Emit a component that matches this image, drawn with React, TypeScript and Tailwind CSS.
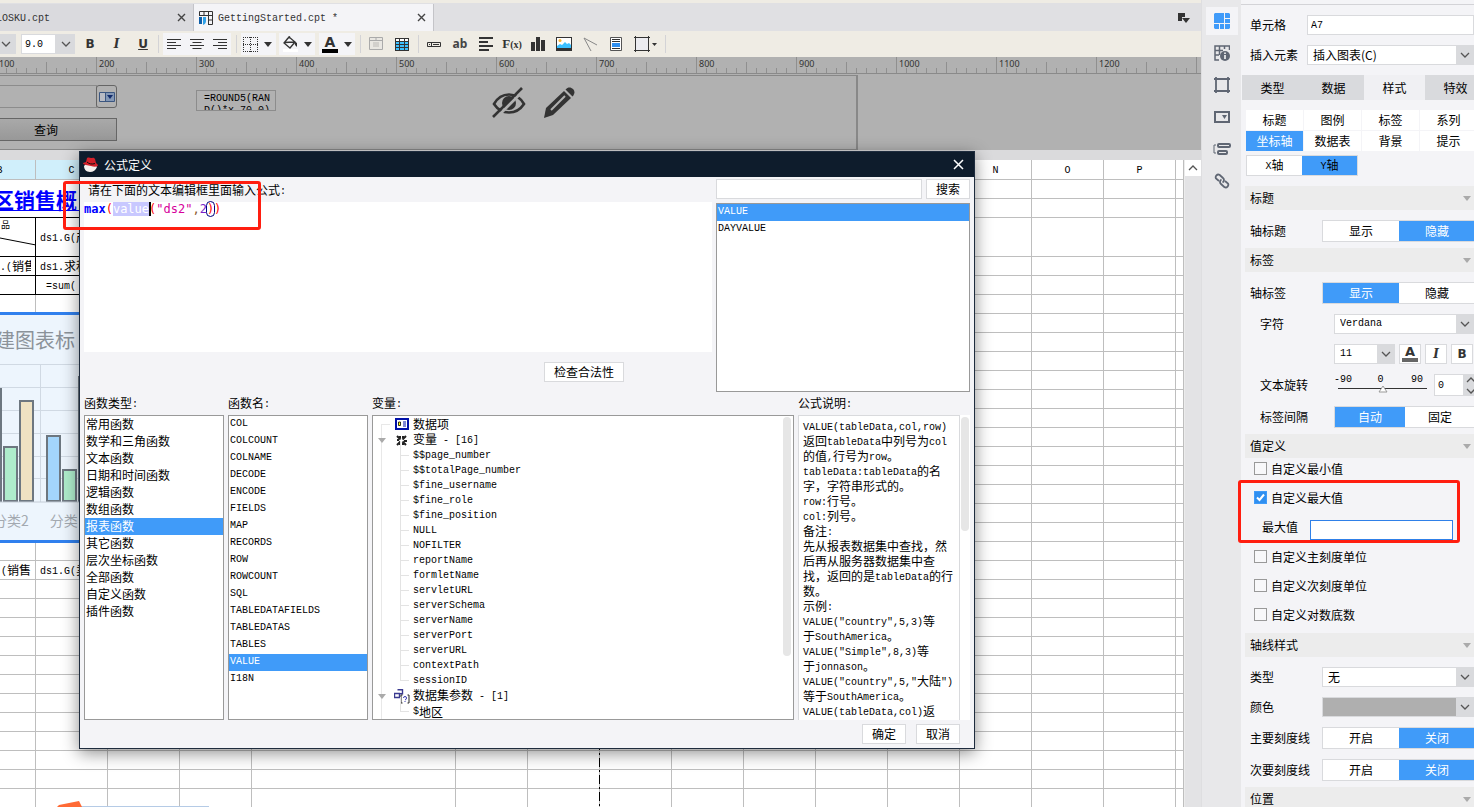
import { useState } from "react"
import clsx from "clsx"
import type { ReactNode } from "react"

const MONO = "font-['Liberation_Mono','Noto_Sans_CJK_SC',monospace] text-[10px]"

type OptionProps = {
    options: string[],
    initial: number,
    className?: string,
    itemClass: string,
}

// latin runs are half the width of a CJK glyph
const T = ({ text }: { text: string }) => (
    <>
        {text.split(/([\x20-\x7e]+)/).filter(Boolean).map((part, i) =>
            /^[\x20-\x7e]/.test(part)
                ? <span key={i} className={clsx(MONO, "align-[1px] whitespace-pre")}>{part}</span>
                : <span key={i}>{part}</span>
        )}
    </>
)

const Chevron = ({ up }: { up?: boolean }) => (
    <svg width="10" height="6" viewBox="0 0 10 6" fill="none" stroke="#555" strokeWidth="1.3">
        <path d={up ? "M1 5l4-4 4 4" : "M1 1l4 4 4-4"} />
    </svg>
)

const Caret = ({ color = "#333" }: { color?: string }) => (
    <svg width="8" height="5" viewBox="0 0 8 5" fill={color}><path d="M0 0h8L4 5z" /></svg>
)

const Cross = () => (
    <svg width="9" height="9" viewBox="0 0 9 9" stroke="#444" strokeWidth="1.4"><path d="M1 1l7 7M8 1L1 8" /></svg>
)

const Select = ({ label, options, className }: { label: string, options: string[], className?: string }) => (
    <div className={clsx("relative flex h-5 border border-[#d9dadd] bg-white", className)}>
        <select aria-label={label} className="w-full appearance-none bg-transparent pl-[5px] leading-[18px] outline-none">
            {options.map(o => <option key={o}>{o}</option>)}
        </select>
        <span className="pointer-events-none absolute inset-y-0 right-0 flex w-[17px] items-center justify-center bg-[#d9dadd]"><Chevron /></span>
    </div>
)

/* ---------- tabs and toolbar ---------- */

const FileTabs = () => (
    <div className="mt-[3px] flex h-7 items-stretch bg-[#e0e0e3] pt-px text-[#333]">
        <div className="flex w-[194px] items-center justify-between border-r border-[#c4c4c8] bg-[#dadade] pr-[7px]">
            <button className="-ml-1"><T text="LOSKU.cpt" /></button>
            <button aria-label="close"><Cross /></button>
        </div>
        <div className="flex w-[240px] items-center border-r border-[#c4c4c8] bg-[#f4f4f7] pr-[7px] pl-[5px]">
            <svg width="14" height="14" viewBox="0 0 14 14">
                <path d="M.5 5V.5h13v13H9M.5 4.500h13M5 .5v4M9.500 .5v13M9 9h4.500" fill="none" stroke="#333" />
                <path d="M0 6h3v7H0z" fill="#0d5ea8" /><path d="M4 6h3v4c0 2-1 3-3 4z" fill="#2fa0e6" />
            </svg>
            <button className="ml-[5px] flex-1 text-left"><T text="GettingStarted.cpt *" /></button>
            <button aria-label="close"><Cross /></button>
        </div>
        <button aria-label="tab list" className="mr-[11px] ml-auto">
            <svg width="12" height="10" viewBox="0 0 12 10" fill="#333"><path d="M0 0h7v4H4v4H0z" /><path d="M4 5h8L8 10z" /></svg>
        </button>
    </div>
)

const Sep = ({ className }: { className?: string }) => <span className={clsx("h-[18px] w-px bg-[#d3d3d6]", className)} />

const alignPaths = [
    "M0 1.500h14M0 4.500h9M0 7.500h14M0 10.500h9",
    "M0 1.500h14M2.500 4.500h9M0 7.500h14M2.500 10.500h9",
    "M0 1.500h14M5 4.500h9M0 7.500h14M5 10.500h9",
]

const toolIcons: { name: string, icon: ReactNode }[] = [
    {
        name: "merge",
        icon: <svg width="14" height="14" viewBox="0 0 14 14"><path d="M.5.5h13v12H.5zM.5 3.500h13M7 .5v3" fill="#e9e7e2" stroke="#aaa" /><path d="M4 5h6v5H4z" fill="#d2d0cc" /></svg>
    },
    {
        name: "unmerge",
        icon: <svg width="14" height="13" viewBox="0 0 14 13"><path d="M0 0h14v13H0z" fill="#333" /><path d="M1 1h3v2H1zM5 1h4v2H5zM10 1h3v2h-3z" fill="#fff" /><path d="M1 4h3v2H1zM5 4h4v2H5zM10 4h3v2h-3zM1 7h3v2H1zM5 7h4v2H5zM10 7h3v2h-3zM1 10h3v2H1zM5 10h4v2H5zM10 10h3v2h-3z" fill="#3cc0ff" /></svg>
    },
    {
        name: "widget",
        icon: <svg width="14" height="5" viewBox="0 0 14 5" fill="none" stroke="#333"><path d="M.5.5h13v4H.5zM4.500 .5v4M6 2.500h6M2 2.500h1" /></svg>
    },
    { name: "text", icon: <span className="font-['Noto_Sans'] text-[12px] font-bold text-[#444]">ab</span> },
    {
        name: "rich text",
        icon: <svg width="15" height="14" viewBox="0 0 15 14" stroke="#333" strokeWidth="2"><path d="M0 1h14M0 5h9M0 9h14M0 13h10" /></svg>
    },
    { name: "formula", icon: <span className="font-['Liberation_Serif'] text-[13px] font-bold text-[#333]">F<span className="text-[10px]">(x)</span></span> },
    {
        name: "chart",
        icon: <svg width="14" height="14" viewBox="0 0 14 14" fill="#333"><path d="M0 5h4v9H0zM5 0h4v14H5zM10 3h4v11h-4z" /></svg>
    },
    {
        name: "image",
        icon: <svg width="16" height="14" viewBox="0 0 16 14"><path d="M0 0h16v14H0z" fill="#333" /><path d="M1 1h14v10H1z" fill="#fff" /><path d="M1 11V9l3-2 2 1 3-3 2 2 2-1 2 2v3z" fill="#3cc0ff" /><circle cx="4" cy="3.500" r="1.500" fill="#ffb52e" /></svg>
    },
    {
        name: "slope line",
        icon: <svg width="14" height="14" viewBox="0 0 14 14" fill="none" stroke="#888"><path d="M14 8L1 1l7 13" /></svg>
    },
    {
        name: "sub report",
        icon: <svg width="12" height="14" viewBox="0 0 12 14"><path d="M.5.5h11v13H.5z" fill="#fff" stroke="#555" /><path d="M2 2.500h8M2 11.500h8M2 4.500h8" stroke="#333" /><path d="M2 6h8v4H2z" fill="#2f8ff0" /></svg>
    },
]

const Toolbar = () => (
    <div className="flex h-[26px] items-center overflow-hidden">
        <button aria-label="font family" className="flex h-5 w-4 items-center justify-center bg-[#d9dadd] pr-1"><Chevron /></button>
        <input aria-label="font size" defaultValue="9.0" className={clsx(MONO, "ml-[5px] h-5 w-[35px] border border-[#d9dadd] bg-white pl-[3px] outline-none")} />
        <button aria-label="sizes" className="flex h-5 w-[19px] items-center justify-center bg-[#d9dadd]"><Chevron /></button>
        <div className="ml-[2px] flex font-['DejaVu_Sans'] text-[12px] text-[#333]">
            <button className="w-[26px] font-bold">B</button>
            <button className="w-[27px] font-['DejaVu_Serif'] font-bold italic">I</button>
            <button className="w-[26px] font-bold underline">U</button>
        </div>
        <Sep className="ml-[2px]" />
        <div className="ml-1 flex h-[22px] w-[68px] items-center justify-around bg-[#f4f4f7]">
            {alignPaths.map(d => (
                <button key={d} aria-label="align"><svg width="14" height="12" viewBox="0 0 14 12" stroke="#333"><path d={d} /></svg></button>
            ))}
        </div>
        <Sep className="ml-[5px]" />
        <button aria-label="border" className="ml-1 flex h-[22px] w-[35px] items-center gap-[6px] bg-[#f4f4f7] pl-[2px]">
            <svg width="15" height="15" viewBox="0 0 15 15" fill="none" stroke="#333"><path d="M0 .5h15M0 14.500h15M.5 0v15M14.500 0v15M0 7.500h15M7.500 0v15" strokeDasharray="1 1" /></svg>
            <Caret />
        </button>
        <button aria-label="fill colour" className="ml-[3px] flex h-[22px] w-9 items-center gap-[6px] bg-[#f4f4f7] pl-1">
            <svg width="15" height="16" viewBox="0 0 15 16" fill="none"><path d="M6 1l6 5-5 6-6-5zM4 3l3-2.500M1.500 6.500L11 6" stroke="#333" strokeWidth="1.300" /><path d="M11 5l3 2v4l-2-2z" fill="#333" /><path d="M0 13h15v3H0z" fill="#fff" /></svg>
            <Caret />
        </button>
        <button aria-label="font colour" className="ml-1 flex h-[22px] w-9 items-center gap-[6px] bg-[#f4f4f7] pl-[3px]">
            <span className="h-[17px] w-4 border-b-4 border-black font-['DejaVu_Sans'] text-[14px] leading-[13px] font-bold text-[#333]">A</span>
            <Caret />
        </button>
        <Sep className="mr-[2px] ml-[5px]" />
        {toolIcons.map((t, i) => (
            <div key={t.name} className="flex items-center">
                {i === 2 && <Sep className="mr-[2px] ml-[3px]" />}
                <button aria-label={t.name} className="flex w-[26px] items-center justify-center leading-[16px]">{t.icon}</button>
            </div>
        ))}
        <button aria-label="float" className="ml-[5px] flex items-center gap-[2px]">
            <svg width="16" height="16" viewBox="0 0 16 16"><path d="M2 2h12v12H2z" fill="#ececf0" /><path d="M0 1.500h16M0 14.500h16M1.500 0v16M14.500 0v16" stroke="#333" /></svg>
            <svg width="5" height="3" viewBox="0 0 5 3" fill="#333"><path d="M0 0h5L2.500 3z" /></svg>
        </button>
        <Sep className="ml-2" />
    </div>
)

const Ruler = () => (
    <div className="h-[18px] overflow-hidden bg-[#b1b1b1]">
        <div className="-ml-1 flex h-[17px] border-b border-[#8a8a8a]">
            {Array.from({ length: 13 }, (_, i) => (
                <div key={i} className="relative flex w-[100px] shrink-0 items-end">
                    {Array.from({ length: 10 }, (_, k) => (
                        <span key={k} className={clsx("w-[10px] border-l border-[#8f8f8f]", k === 0 ? "h-4" : k === 5 ? "h-[11px]" : "h-[5px]")} />
                    ))}
                    {i < 12 && <span className="absolute top-0 left-[3px] font-['Noto_Sans'] text-[9px] leading-[13px] text-[#333]">{(i + 1) * 100}</span>}
                </div>
            ))}
        </div>
    </div>
)

const ParamPane = () => (
    <div className="h-[75px] bg-[#b1b1b1]">
        <div className="relative h-[75px] w-[858px] border-t border-r-2 border-b border-[#888]">
            <input aria-label="parameter" className="absolute top-[9px] left-0 h-[23px] w-[97px] border border-l-0 border-[#8c8c8c]" />
            <button aria-label="drop-down" className="absolute top-[9px] left-[96px] flex h-[23px] w-[21px] items-center justify-center rounded-[3px] border border-[#666]">
                <svg width="16" height="10" viewBox="0 0 16 10"><path d="M.5.5h15v9H.5z" fill="#b9bcc4" stroke="#3b5680" /><path d="M7 1h8v8H7z" fill="#8397b5" /><path d="M6.500 0v10" stroke="#3b5680" /><path d="M8 3h6l-3 4z" fill="#112a6b" /></svg>
            </button>
            <button className="absolute top-[42px] left-0 h-[23px] w-[117px] border border-l-0 border-[#666] bg-linear-to-b from-[#a9a9a9] to-[#989898] pr-[24px] text-[12px]">查询</button>
            <div className={clsx(MONO, "absolute top-[14px] left-[196px] h-[21px] w-20 overflow-hidden border border-[#8c8c8c] pt-[2px] pl-[7px] leading-[12px] whitespace-nowrap")}>
                =ROUND5(RAN<br />D()*x,70,0)
            </div>
            <button aria-label="hide" className="absolute top-[11px] left-[492px]">
                <svg width="34" height="32" viewBox="0 0 34 32" fill="none" stroke="#333" strokeWidth="2.600">
                    <path d="M2 17C6 10 11 7.500 17 7.500S28 10 32 17c-4 6-9 8.500-15 8.500S6 23 2 17z" />
                    <circle cx="17" cy="16" r="7" fill="#333" stroke="none" />
                    <path d="M3 32L33 2" stroke="#b1b1b1" strokeWidth="3" /><path d="M1 30L30 1" />
                </svg>
            </button>
            <button aria-label="edit" className="absolute top-[11px] left-[543px]">
                <svg width="32" height="31" viewBox="0 0 32 31" fill="#333">
                    <path d="M1 31l2-10L21 4l7 7-18 17z" /><path d="M22.500 2.500C25-.5 28 0 30 2s2 5-.5 7.500z" /><path d="M8 23L22 9" stroke="#b1b1b1" strokeWidth="2" />
                </svg>
            </button>
        </div>
    </div>
)

/* ---------- sheet ---------- */

const columns: { label: string, width: string }[] = [
    { label: "B", width: "w-9" },
    { label: "C", width: "w-[72px]" },
    { label: "", width: "w-[72px]" },
    { label: "", width: "w-[72px]" },
    { label: "", width: "w-[204px]" },
    ...Array.from({ length: 7 }, () => ({ label: "", width: "w-[72px]" })),
    { label: "N", width: "w-[72px]" },
    { label: "O", width: "w-[72px]" },
    { label: "P", width: "w-[72px]" },
    { label: "", width: "" },
]

const cellText: Record<string, string> = {
    "2-1": "ds1.G(产",
    "3-0": ".(销售",
    "3-1": "ds1.求和",
    "4-1": " =sum(",
    "19-0": "(销售",
    "19-1": "ds1.G(卖",
}

const Sheet = () => (
    <table className="w-full table-fixed border-separate border-spacing-0 bg-white">
        <colgroup>
            {columns.map((c, i) => <col key={i} className={c.width} />)}
        </colgroup>
        <thead>
            <tr>
                {columns.map((c, i) => (
                    <th key={i} className={clsx("h-5 border-r border-b border-[#bebebe] p-0 font-normal", i < 2 && "bg-[#d0effb]")}>
                        <span className={clsx(i === 0 && "-ml-9", MONO)}>{c.label}</span>
                    </th>
                ))}
            </tr>
        </thead>
        <tbody>
            {Array.from({ length: 33 }, (_, r) => (
                <tr key={r}>
                    {columns.map((_, c) => {
                        if (r < 2 && c < 4) {
                            return r === 0 && c === 0
                                ? <td key={c} rowSpan={2} colSpan={4} className="h-[38px] border-b border-black p-0 align-top">
                                    <div className="-ml-[7px] h-[31px] border-b border-[#00f] text-[21px] leading-[38px] font-bold whitespace-nowrap text-[#00f]">区销售概</div>
                                </td>
                                : null
                        }
                        const inked = r > 1 && r < 5 && c < 2
                        const text = cellText[`${r}-${c}`]
                        return (
                            <td key={c} className={clsx(
                                "overflow-hidden border-r border-b p-0 whitespace-nowrap",
                                r === 2 ? "h-[39px]" : "h-[19px]",
                                inked ? "border-black" : "border-[#bebebe]",
                                c === 1 ? "pl-1" : c === 0 && "pr-1 text-right",
                            )}>
                                {r === 2 && c === 0 &&
                                    <svg width="36" height="38" viewBox="0 0 36 38" className="-mr-1"><text x="1" y="10" fontSize="9">品</text><path d="M0 20l36 7" stroke="#000" /></svg>}
                                {text && <div className="h-[18px] overflow-hidden leading-[17px]"><T text={text} /></div>}
                            </td>
                        )
                    })}
                </tr>
            ))}
        </tbody>
    </table>
)

const bars = [
    { x: -12, y: 74, fill: "#9fcdf5" },
    { x: 4, y: 132, fill: "#aeeccb" },
    { x: 20, y: 86, fill: "#efe2c2" },
    { x: 47, y: 121, fill: "#a3d5fb" },
    { x: 63, y: 155, fill: "#aeeccb" },
    { x: 79, y: 62, fill: "#efe2c2" },
]

const FloatChart = () => (
    <div className="absolute top-[152px] left-0 h-[231px] w-20 overflow-hidden border-y-[3px] border-[#3080ee] bg-[#edf5fd]">
        <div className="-ml-[5px] pt-[11px] text-[20px] leading-[28px] whitespace-nowrap text-[#8b9299]">建图表标</div>
        <svg className="-mt-[39px] block" width="320" height="190" viewBox="0 0 320 190" fill="none">
            <path d="M0 49.500h320M0 72.500h320M0 95.500h320M0 118.500h320M0 141.500h320M0 163.500h320M40.500 49v138" stroke="#d0d9e3" />
            {bars.map(b => <rect key={b.x} x={b.x} y={b.y} width="13" height={186 - b.y} fill={b.fill} stroke="#6d7780" strokeWidth="2" />)}
            <path d="M0 187h320" stroke="#c4ccd6" />
        </svg>
        <div className="-ml-[7px] flex gap-[21px] pt-[2px] text-[14px] leading-[26px] whitespace-nowrap text-[#a3a9b0]"><span>分类2</span><span>分类</span></div>
    </div>
)

/* ---------- formula dialog ---------- */

const functionTypes = ["常用函数", "数学和三角函数", "文本函数", "日期和时间函数", "逻辑函数", "数组函数", "报表函数", "其它函数", "层次坐标函数", "全部函数", "自定义函数", "插件函数"]

const functionNames = ["COL", "COLCOUNT", "COLNAME", "DECODE", "ENCODE", "FIELDS", "MAP", "RECORDS", "ROW", "ROWCOUNT", "SQL", "TABLEDATAFIELDS", "TABLEDATAS", "TABLES", "VALUE", "I18N"]

const variables = ["$$page_number", "$$totalPage_number", "$fine_username", "$fine_role", "$fine_position", "NULL", "NOFILTER", "reportName", "formletName", "servletURL", "serverSchema", "serverName", "serverPort", "serverURL", "contextPath", "sessionID"]

const description = [
    "VALUE(tableData,col,row)",
    "返回tableData中列号为col",
    "的值,行号为row。",
    "tableData:tableData的名",
    "字，字符串形式的。",
    "row:行号。",
    "col:列号。",
    "备注:",
    "先从报表数据集中查找，然",
    "后再从服务器数据集中查",
    "找，返回的是tableData的行",
    "数。",
    "示例:",
    "VALUE(\"country\",5,3)等",
    "于SouthAmerica。",
    "VALUE(\"Simple\",8,3)等",
    "于jonnason。",
    "VALUE(\"country\",5,\"大陆\")",
    "等于SouthAmerica。",
    "VALUE(tableData,col)返",
]

const List = ({ items, initial, className }: { items: string[], initial: string, className: string }) => {
    const [selected, setSelected] = useState<string>(initial);

    return (
        <ul className={clsx("border border-[#999] bg-white", className)}>
            {items.map(item => (
                <li key={item} className="flex">
                    <button
                        onClick={() => setSelected(item)}
                        className={clsx("flex h-[17px] w-full items-start pl-px text-left leading-[15px]", item === selected && "bg-[#409bf9] text-white")}
                    >
                        <T text={item} />
                    </button>
                </li>
            ))}
        </ul>
    )
}

const TreeGroup = ({ icon, text, open }: { icon: ReactNode, text: string, open?: boolean }) => (
    <div className="flex h-4 items-center leading-[14px]">
        <span className="flex w-[21px] justify-center pr-[4px]">{open && <Caret color="#aaa" />}</span>
        <span className="mr-[4px] flex w-[15px] justify-center">{icon}</span>
        <span><T text={text} /></span>
    </div>
)

const TreeLeaf = ({ text }: { text: string }) => (
    <div className="flex h-[15px] items-center pl-[27px] leading-[15px]">
        <span className="mr-1 -mt-[15px] h-[15px] w-[9px] border-b border-l border-[#e3e3e3]" />
        <T text={text} />
    </div>
)

const VariableTree = () => (
    <div className="relative h-[305px] flex-1 overflow-hidden border border-[#999] bg-white">
        <span className="absolute top-2 left-2 h-full w-[9px] border-t border-l border-[#e8e8e8]" />
        <div className="relative">
            <TreeGroup text="数据项" icon={<svg width="14" height="12" viewBox="0 0 14 12"><path d="M1 1h12v10H1z" fill="#fff" stroke="#0010a8" strokeWidth="2" /><path d="M3.500 4h2v3.500h-2z" fill="#ff0" stroke="#000" strokeWidth=".8" /><path d="M8 4h3M8 6h3M8 8h3" stroke="#0010a8" /></svg>} />
            <TreeGroup open text="变量 - [16]" icon={<svg width="11" height="11" viewBox="0 0 11 11" fill="none" stroke="#222" strokeWidth="2"><path d="M1 1l3.500 3.500M10 1L6.500 4.500M1 10l3.500-3.500M10 10L6.500 6.500M4 1v2M1 5h2M8 6h3M7 8v2M4 8v2M7 1v2" /></svg>} />
            {variables.map(v => <TreeLeaf key={v} text={v} />)}
            <TreeGroup open text="数据集参数 - [1]" icon={<svg width="16" height="15" viewBox="0 0 16 15" fill="none" className="shrink-0"><path d="M.5 4.500h5v4h-5zM3.500 .8h5v4h-3" stroke="#3a3a90" strokeWidth="1.400" /><path d="M8.500 6H7v8h1.500M13.500 6H15v8h-1.500" stroke="#222" /><path d="M9.500 9q0-1.500 1.500-1.500T12.500 9 11 11M11 12v1" stroke="#3a3ab0" /></svg>} />
            <TreeLeaf text="$地区" />
        </div>
        <span className="absolute top-px right-[2px] h-[239px] w-2 rounded-full bg-[#e6e6e6]" />
    </div>
)

const DialogButton = ({ text, className }: { text: string, className: string }) => (
    <button className={clsx("h-5 border border-[#d9dadd] bg-white leading-[18px]", className)}>{text}</button>
)

const ColumnTitle = ({ text }: { text: string }) => <h3 className="h-[23px] leading-[21px]"><T text={text} /></h3>

const FormulaDialog = () => (
    <div role="dialog" aria-label="公式定义" className="absolute top-[151px] left-[79px] w-[896px] border border-[#1e2c3e] bg-[#f4f4f7] shadow-[0_4px_16px_rgba(0,0,0,0.45)]">
        <div className="flex h-[25px] items-center bg-[#0e1c2c] pr-[10px] pl-[3px] text-white">
            <svg width="15" height="15" viewBox="0 0 15 15"><path d="M1 9l2-2h9l2 3c-1 3-4 5-7 5-4 0-6-3-6-6z" fill="#f5f0ee" /><path d="M0 6l3-1 1-4c2-1 3 0 4 0s3-1 4 1l1 4 2 2c0 2-4 2-7 1S0 8 0 6z" fill="#d3202a" /><path d="M4 5c2 2 5 2.500 8 1.500" stroke="#111" fill="none" /></svg>
            <h2 className="ml-[6px] flex-1">公式定义</h2>
            <button aria-label="close">
                <svg width="11" height="11" viewBox="0 0 11 11" stroke="#fff" strokeWidth="1.500"><path d="M1 1l9 9M10 1L1 10" /></svg>
            </button>
        </div>
        <div className="px-1 pt-[2px] pb-1">
            <div className="flex gap-1">
                <div className="flex-1">
                    <div className="h-[23px] pl-1 leading-[21px]"><T text="请在下面的文本编辑框里面输入公式:" /></div>
                    <div role="textbox" aria-label="formula" className="h-[150px] bg-white font-['DejaVu_Sans_Mono'] text-[12px] leading-[15px] text-[#f00]">
                        <span className="font-bold text-[#00f]">max</span>(
                        <span className="bg-[#c8c8ff] text-white shadow-[2px_0_0_#000]">value</span>(
                        <span className="text-[#d6009b]">"ds2"</span><span className="text-[#8a5a2b]">,</span><span className="text-[#7a1fc9]">2</span>
                        <span className="rounded-full outline-1 outline-[#000080]">)</span>)
                    </div>
                    <div className="flex h-[30px] items-end justify-end pr-[88px]"><DialogButton text="检查合法性" className="w-20" /></div>
                </div>
                <div className="w-[254px]">
                    <div className="flex h-5 gap-1">
                        <input aria-label="search" className="min-w-0 flex-1 border border-[#d9dadd] bg-white px-1 outline-none" />
                        <DialogButton text="搜索" className="w-11" />
                    </div>
                    <List items={["VALUE", "DAYVALUE"]} initial="VALUE" className="mt-1 h-[189px]" />
                </div>
            </div>
            <div className="flex gap-1">
                <div className="w-[140px]">
                    <ColumnTitle text="函数类型:" />
                    <List items={functionTypes} initial="报表函数" className="h-[305px]" />
                </div>
                <div className="w-[140px]">
                    <ColumnTitle text="函数名:" />
                    <List items={functionNames} initial="VALUE" className="h-[305px]" />
                </div>
                <div className="flex flex-1 flex-col">
                    <ColumnTitle text="变量:" />
                    <VariableTree />
                </div>
                <div className="w-[172px]">
                    <ColumnTitle text="公式说明:" />
                    <div className="flex h-[305px] bg-white">
                        <div className="w-[162px] overflow-hidden border border-b-0 border-[#d9dadd] pt-[2px] pl-1 leading-[15px] whitespace-nowrap">
                            {description.map((line, i) => <p key={i} className="h-[15px]"><T text={line} /></p>)}
                        </div>
                        <span className="mt-[2px] ml-px h-[114px] w-2 rounded-full bg-[#e6e6e6]" />
                    </div>
                </div>
            </div>
            <div className="mt-1 flex justify-end gap-[10px] pr-[10px]">
                <DialogButton text="确定" className="w-11" />
                <DialogButton text="取消" className="w-11" />
            </div>
        </div>
    </div>
)

/* ---------- right side ---------- */

const railIcons = [
    <svg width="16" height="16" viewBox="0 0 16 16" fill="#409bf9"><path d="M1 0h9v10H0V1zM11 0h4l1 1v4h-5zM11 6h5v4h-5zM0 11h5v5H1l-1-1zM6 11h4v5H6zM11 11h5v4l-1 1h-4z" /></svg>,
    <svg width="16" height="17" viewBox="0 0 16 17" fill="none" stroke="#5f6673" strokeWidth="1.500"><path d="M15.500 5V1H1v14h4M1 5.500h8M1 10h4M5.500 1v9M10.500 1v3" /><circle cx="11" cy="11" r="5" fill="#5f6673" stroke="none" /><path d="M11 7.500v1.500M11 10v4" stroke="#fff" /></svg>,
    <svg width="16" height="16" viewBox="0 0 16 16" fill="none" stroke="#5f6673" strokeWidth="1.800"><path d="M2 2h12v12H2z" /><path d="M0 2h3M13 2h3M0 14h3M13 14h3M2 0v3M14 0v3M2 13v3M14 13v3" /></svg>,
    <svg width="16" height="12" viewBox="0 0 16 12" fill="none" stroke="#5f6673" strokeWidth="2"><path d="M1 1h14v10H1z" /><path d="M8 4h5l-2.500 4z" fill="#5f6673" stroke="none" /></svg>,
    <svg width="18" height="12" viewBox="0 0 18 12" fill="none" stroke="#5f6673" strokeWidth="2"><path d="M3 2H1v8h2" strokeWidth="1" /><rect x="5" y="1" width="12" height="3" rx="1" /><rect x="5" y="8" width="9" height="3" rx="1" /></svg>,
    <svg width="16" height="16" viewBox="0 0 16 16" fill="none" stroke="#5f6673" strokeWidth="1.800"><path d="M5 8L2 5.500A2.700 2.700 0 0 1 5.500 1.800L9 5a2.700 2.700 0 0 1-.5 4.500" /><path d="M11 8l3 2.500a2.700 2.700 0 0 1-3.500 3.700L7 11a2.700 2.700 0 0 1 .5-4.500" /></svg>,
]

const Rail = () => (
    <nav className="flex w-10 shrink-0 flex-col items-center gap-1 border-l border-[#dedee0] bg-[#e8e8ea] pt-[7px]">
        {railIcons.map((icon, i) => (
            <button key={i} aria-label={`panel ${i + 1}`} className={clsx("flex h-7 w-8 items-center justify-center", i === 0 && "bg-[#f4f4f7]")}>{icon}</button>
        ))}
    </nav>
)

const Tabs = ({ options, initial, className, itemClass }: OptionProps) => {
    const [active, setActive] = useState<number>(initial);

    return (
        <div className={clsx("flex border border-[#d9dadd] bg-white", className)}>
            {options.map((o, i) => (
                <button key={o} onClick={() => setActive(i)} className={clsx("shrink-0", itemClass, i === active && "bg-[#409bf9] text-white")}><T text={o} /></button>
            ))}
        </div>
    )
}

const Section = ({ text, className = "mt-[6px]" }: { text: string, className?: string }) => (
    <h3 className={clsx("ml-1 flex h-6 items-center justify-between bg-[#ececec] pr-[3px] pl-[5px]", className)}>
        {text}<Caret color="#aaa" />
    </h3>
)

// indented rows belong to the setting above them
const Row = ({ label, indent, children }: { label: string, indent?: boolean, children: ReactNode }) => (
    <div className={clsx("mt-[10px] flex items-center", indent ? "pl-[19px]" : "pl-[9px]")}>
        <span className={clsx("shrink-0", indent ? "w-[74px]" : "w-[72px]")}>{label}</span>
        {children}
    </div>
)

const Check = ({ label, initial = false }: { label: string, initial?: boolean }) => {
    const [checked, setChecked] = useState<boolean>(initial);

    return (
        <label className="flex h-[29px] items-center gap-1 pl-[13px]">
            <span className="relative flex">
                <input
                    type="checkbox"
                    checked={checked}
                    onChange={() => setChecked(prev => !prev)}
                    className="h-[13px] w-[13px] appearance-none border border-[#999] bg-[#f8f8fa] checked:border-[#409bf9] checked:bg-[#2f8ff0]"
                />
                {checked && <svg className="pointer-events-none absolute inset-0" width="13" height="13" viewBox="0 0 13 13" fill="none" stroke="#fff" strokeWidth="2"><path d="M3 6.500L5.500 9 10 3.500" /></svg>}
            </span>
            {label}
        </label>
    )
}

const TopTabs = () => {
    const [tab, setTab] = useState<string>("样式");
    const [page, setPage] = useState<string>("坐标轴");

    return (
        <>
            <div className="mt-[10px] ml-px flex h-[25px] bg-[#d9dadd]">
                {["类型", "数据", "样式", "特效"].map(t => (
                    <button key={t} onClick={() => setTab(t)} className={clsx("w-[61px] shrink-0", t === tab && "bg-[#f0f0f3]")}>{t}</button>
                ))}
            </div>
            <div className="mt-[10px] ml-[5px] grid w-[231px] grid-cols-4 gap-px">
                {["标题", "图例", "标签", "系列", "坐标轴", "数据表", "背景", "提示"].map(p => (
                    <button key={p} onClick={() => setPage(p)} className={clsx("h-5", p === page ? "bg-[#409bf9] text-white" : "bg-white")}>{p}</button>
                ))}
            </div>
        </>
    )
}

const PropertyPanel = () => (
    <aside className="relative w-[233px] shrink-0 bg-[#f4f4f7]">
        <div className="h-screen overflow-hidden">
            <div className="mt-1 border-t border-[#d3d3d7]" />
            <div className="mt-[10px] flex h-5 items-center pl-[9px]">
                <label htmlFor="cell" className="w-[57px] shrink-0">单元格</label>
                <input id="cell" defaultValue="A7" className={clsx(MONO, "h-5 w-[170px] border border-[#d9dadd] bg-white pl-[3px] outline-none")} />
            </div>
            <div className="mt-[10px] flex h-5 items-center pl-[9px]">
                <span className="w-[57px] shrink-0">插入元素</span>
                <Select label="插入元素" options={["插入图表(C)"]} className="flex-1" />
            </div>
            <TopTabs />
            <Tabs options={["X轴", "Y轴"]} initial={1} className="mt-1 ml-[5px] h-[21px] w-[112px]" itemClass="w-[55px] text-black!" />

            <Section text="标题" className="mt-[10px]" />
            <Row label="轴标题"><Tabs options={["显示", "隐藏"]} initial={1} className="h-[22px]" itemClass="w-[76px]" /></Row>
            <Section text="标签" />
            <Row label="轴标签"><Tabs options={["显示", "隐藏"]} initial={0} className="h-[22px]" itemClass="w-[76px]" /></Row>
            <Row indent label="字符"><Select label="字符" options={["Verdana"]} className={clsx(MONO, "flex-1")} /></Row>
            <div className="mt-[10px] flex gap-1 pl-[93px] text-[#333]">
                <Select label="字号" options={["11"]} className={clsx(MONO, "w-[61px] text-black")} />
                <button className="flex h-5 w-[22px] items-start justify-center border border-[#d9dadd] bg-white"><span className="h-[17px] w-4 border-b-4 border-[#666] font-['DejaVu_Sans'] text-[13px] leading-[13px] font-bold">A</span></button>
                <button className="h-5 w-[22px] border border-[#d9dadd] bg-white font-['DejaVu_Serif'] font-bold italic">I</button>
                <button className="h-5 w-[22px] border border-[#d9dadd] bg-white font-['DejaVu_Sans'] font-bold">B</button>
            </div>
            <Row indent label="文本旋转">
                <div className="h-[22px] w-[100px] shrink-0 pr-[7px]">
                    <div className={clsx(MONO, "grid grid-cols-3 leading-[12px]")}><span>-90</span><span className="text-center">0</span><span className="pr-1 text-right">90</span></div>
                    <div className="relative mt-[2px] ml-1 border-t border-[#333]">
                        <input type="range" aria-label="文本旋转" min={-90} max={90} defaultValue={0} className="absolute -top-2 left-0 h-4 w-full opacity-0" />
                        <svg className="pointer-events-none absolute -top-1 left-1/2 -ml-[5px]" width="10" height="8" viewBox="0 0 10 8" fill="#fff" stroke="#999"><path d="M5 1l4 6H1z" /></svg>
                    </div>
                </div>
                <input aria-label="角度" defaultValue="0" className={clsx(MONO, "h-[22px] w-[30px] shrink-0 border border-[#d9dadd] bg-white pl-[3px] outline-none")} />
                <div className="flex h-[22px] flex-col bg-[#d9dadd]">
                    <button aria-label="increase" className="flex h-[11px] w-[14px] items-center justify-center"><Chevron up /></button>
                    <button aria-label="decrease" className="flex h-[11px] w-[14px] items-center justify-center"><Chevron /></button>
                </div>
            </Row>
            <Row indent label="标签间隔"><Tabs options={["自动", "固定"]} initial={0} className="h-[22px]" itemClass="w-[70px]" /></Row>

            <Section text="值定义" />
            <div className="-mt-1"><Check label="自定义最小值" /></div>
            <Check label="自定义最大值" initial />
            <div className="flex h-[30px] items-start pt-2 pl-[21px]">
                <label htmlFor="max" className="w-12 shrink-0 leading-[14px]">最大值</label>
                <input id="max" className="h-5 w-[143px] border border-[#2f80e8] bg-white px-1 outline-none" />
            </div>
            <Check label="自定义主刻度单位" />
            <Check label="自定义次刻度单位" />
            <Check label="自定义对数底数" />

            <Section text="轴线样式" className="mt-1" />
            <Row label="类型"><Select label="类型" options={["无"]} className="flex-1" /></Row>
            <Row label="颜色">
                <button aria-label="颜色" className="flex h-5 flex-1 items-center justify-between border border-[#d9dadd] bg-[#d9dadd]">
                    <span className="h-full flex-1 bg-[#afafaf]" /><span className="flex w-[17px] justify-center"><Chevron /></span>
                </button>
            </Row>
            <Row label="主要刻度线"><Tabs options={["开启", "关闭"]} initial={1} className="h-[22px]" itemClass="w-[76px]" /></Row>
            <Row label="次要刻度线"><Tabs options={["开启", "关闭"]} initial={1} className="h-[22px]" itemClass="w-[76px]" /></Row>
            <Section text="位置" />
        </div>
        <div className="pointer-events-none absolute top-[480px] -left-[3px] h-[63px] w-[222px] rounded-[3px] border-[3px] border-[#ff1e10]" />
    </aside>
)

const App = () => {
    return (
        <div className="relative flex h-screen overflow-hidden bg-[#efece4] font-['Noto_Sans_CJK_SC','Noto_Sans',sans-serif] text-[12px] leading-[16px] text-black">
            <main className="flex min-w-0 flex-1 flex-col overflow-hidden">
                <FileTabs />
                <Toolbar />
                <Ruler />
                <ParamPane />
                <div className="h-[10px] shrink-0 bg-[#dadadc]" />
                <div className="flex min-h-0 flex-1">
                    <div className="relative flex-1 overflow-hidden">
                        <Sheet />
                        <FloatChart />
                        <svg className="absolute top-5 left-[599px] h-full w-px" stroke="#000" strokeWidth="2"><path d="M0 0v900" strokeDasharray="9 3 2 3" /></svg>
                        <svg className="absolute bottom-0 left-[57px]" width="153" height="6" viewBox="0 0 153 6"><path d="M24 5.500h128" stroke="#b5cbe6" /><path d="M0 6l2-2 20-4 3 6z" fill="#ff6a35" /></svg>
                    </div>
                    <div className="w-[17px] border-l border-[#ececec] bg-[#e3e3e5]">
                        <button aria-label="scroll up" className="flex h-4 w-full items-center justify-center bg-white"><Chevron up /></button>
                    </div>
                </div>
            </main>
            <Rail />
            <PropertyPanel />
            <FormulaDialog />
            <div className="pointer-events-none absolute top-[181px] left-[63px] h-[49px] w-[198px] rounded-[3px] border-[3px] border-[#ff1e10]" />
        </div>
    )
}

export default App
